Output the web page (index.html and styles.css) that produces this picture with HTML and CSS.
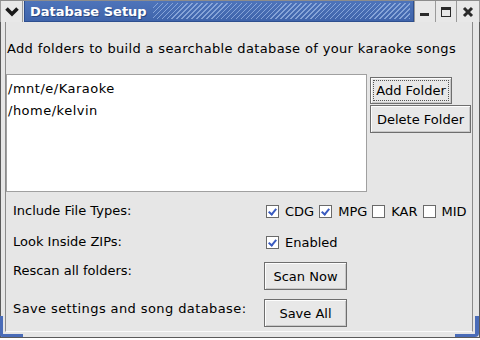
FILE: index.html
```html
<!DOCTYPE html>
<html>
<head>
<meta charset="utf-8">
<link rel="stylesheet" href="styles.css">
</head>
<body>
<div class="window">
  <div class="titlebar">
    <div class="menu-btn">
      <svg width="16" height="12" viewBox="0 0 16 12"><path d="M2.5 2.5 L8 8 L13.5 2.5" fill="none" stroke="#1a1a1a" stroke-width="3.6"/></svg>
    </div>
    <div class="title">
      <span class="title-text">Database Setup</span>
      <span class="hatch"></span>
    </div>
    <div class="wbtn">
      <svg width="12" height="12" viewBox="0 0 12 12"><rect x="1" y="7" width="9" height="3" fill="#2a2a2a"/></svg>
    </div>
    <div class="wbtn">
      <svg width="12" height="12" viewBox="0 0 12 12"><rect x="1.5" y="1.5" width="9" height="9" fill="none" stroke="#2a2a2a" stroke-width="1"/><rect x="1" y="1" width="10" height="3" fill="#2a2a2a"/></svg>
    </div>
    <div class="wbtn last">
      <svg width="12" height="12" viewBox="0 0 12 12"><path d="M2 2 L10 10 M10 2 L2 10" stroke="#2a2a2a" stroke-width="3"/></svg>
    </div>
  </div>
  <div class="body">
    <p class="desc">Add folders to build a searchable database of your karaoke songs</p>
    <div class="folders">
      <div class="list">
        <div class="item">/mnt/e/Karaoke</div>
        <div class="item">/home/kelvin</div>
      </div>
      <div class="side">
        <button class="btn add"><span class="focus">Add Folder</span></button>
        <button class="btn del">Delete Folder</button>
      </div>
    </div>
    <div class="row r1">
      <span class="label">Include File Types:</span>
      <div class="checks">
        <span class="chk on"></span><span class="ctext">CDG</span>
        <span class="chk on"></span><span class="ctext">MPG</span>
        <span class="chk"></span><span class="ctext">KAR</span>
        <span class="chk"></span><span class="ctext">MID</span>
      </div>
    </div>
    <div class="row r2">
      <span class="label">Look Inside ZIPs:</span>
      <div class="checks">
        <span class="chk on"></span><span class="ctext">Enabled</span>
      </div>
    </div>
    <div class="row r3">
      <span class="label">Rescan all folders:</span>
      <button class="btn act">Scan Now</button>
    </div>
    <div class="row r4">
      <span class="label wide">Save settings and song database:</span>
      <button class="btn act">Save All</button>
    </div>
    <span class="corner bl"></span>
    <span class="corner br"></span>
  </div>
</div>
</body>
</html>
```
FILE: styles.css
```css
html, body {
  margin: 0;
  padding: 0;
  background: #ffffff;
}
body {
  font-family: "DejaVu Sans", sans-serif;
  font-size: 13px;
  color: #000;
}
.window {
  width: 480px;
  height: 338px;
  box-sizing: border-box;
  display: flex;
  flex-direction: column;
  background: #e6e6e6;
  border: 1px solid #5a5a5a;
  border-top: none;
  position: relative;
}
.titlebar {
  height: 22px;
  display: flex;
  border-top: 1px solid #8c8c8c;
  box-sizing: border-box;
  margin-left: -1px;
  margin-right: -1px;
}
.menu-btn {
  width: 23px;
  box-sizing: border-box;
  border-right: 1px solid #9a9a9a;
  border-left: 1px solid #9a9a9a;
  background: #e8e8e8;
  display: flex;
  align-items: center;
  justify-content: center;
}
.title {
  flex: 1;
  display: flex;
  align-items: center;
  background: linear-gradient(#4e74ba, #3f64ab);
  border: 1px solid #2e4f8f;
  border-top: none;
  margin-left: 1px;
}
.title-text {
  color: #fff;
  font-weight: bold;
  font-size: 13px;
  padding-left: 5px;
  padding-right: 6px;
  text-shadow: 1px 1px 0 #2a477f;
  white-space: nowrap;
}
.hatch {
  flex: 1;
  align-self: stretch;
  margin: 2px 3px 2px 0;
  background: repeating-linear-gradient(-45deg, rgba(150,178,225,0.8) 0 1px, transparent 1px 3.5px);
}
.wbtn {
  width: 21px;
  box-sizing: border-box;
  background: #e8e8e8;
  border-left: 1px solid #9a9a9a;
  display: flex;
  align-items: center;
  justify-content: center;
}
.wbtn.last {
  width: 24px;
  border-right: 1px solid #9a9a9a;
}
.body {
  flex: 1;
  margin: 0 6px 5px 4px;
  border-left: 1px solid #8a8a8a;
  border-right: 1px solid #8a8a8a;
  border-bottom: 1px solid #fafafa;
  position: relative;
}
.desc {
  margin: 19px 0 0 1px;
  line-height: 16px;
  white-space: nowrap;
  letter-spacing: 0.35px;
}
.folders {
  display: flex;
  gap: 3px;
  margin-top: 17px;
}
.list {
  width: 361px;
  height: 118px;
  box-sizing: border-box;
  background: #fff;
  border: 1px solid #a0a0a0;
  padding: 3px 0 0 1px;
}
.item {
  line-height: 22px;
  letter-spacing: 0.5px;
}
.side {
  display: flex;
  flex-direction: column;
  align-items: flex-start;
  padding-top: 3px;
  gap: 1px;
}
.btn {
  font-family: "DejaVu Sans", sans-serif;
  font-size: 13px;
  color: #000;
  background: #e8e8e8;
  border: 1px solid #6e6e6e;
  box-shadow: inset 1px 1px 0 #fdfdfd, inset -1px -1px 0 #c8c8c8;
  margin: 0;
  padding: 0;
  box-sizing: border-box;
  white-space: nowrap;
}
.btn.add {
  width: 82px;
  height: 27px;
  padding: 2px;
}
.focus {
  display: block;
  height: 100%;
  box-sizing: border-box;
  border: 1px dotted #555;
  line-height: 19px;
}
.btn.del {
  width: 101px;
  height: 28px;
}
.row {
  display: flex;
  align-items: center;
}
.label {
  width: 258px;
  padding-left: 7px;
  box-sizing: border-box;
  flex: none;
  line-height: 16px;
  white-space: nowrap;
}
.label.wide {
  letter-spacing: 0.4px;
}
.r1 { margin-top: 10px; height: 18px; }
.r2 { margin-top: 13px; height: 18px; }
.r3 { margin-top: 11px; height: 28px; align-items: flex-start; }
.r4 { margin-top: 9px; height: 28px; align-items: flex-start; }
.r3 .label { margin-top: 1px; }
.r4 .label { margin-top: 2px; }
.checks {
  display: flex;
  align-items: center;
  margin-left: 2px;
}
.chk {
  width: 13px;
  height: 13px;
  box-sizing: border-box;
  background: #fff;
  border: 1px solid #6a6a6a;
  margin-right: 6px;
  position: relative;
}
.chk.on::after {
  content: "";
  position: absolute;
  left: 3px;
  top: 1px;
  width: 3px;
  height: 6px;
  border-right: 2px solid #3a5bc0;
  border-bottom: 2px solid #3a5bc0;
  transform: rotate(40deg);
}
.ctext {
  margin-right: 5px;
}
.btn.act {
  width: 83px;
  height: 28px;
}
.corner {
  position: absolute;
  border-color: #4a6cb8;
  border-style: solid;
  width: 20px;
  height: 18px;
}
.corner.bl {
  left: -6px;
  bottom: -6px;
  border-width: 0 0 3px 3px;
  border-bottom-left-radius: 3px;
}
.corner.br {
  right: -7px;
  bottom: -6px;
  border-width: 0 4px 3px 0;
  border-bottom-right-radius: 4px;
}
```
